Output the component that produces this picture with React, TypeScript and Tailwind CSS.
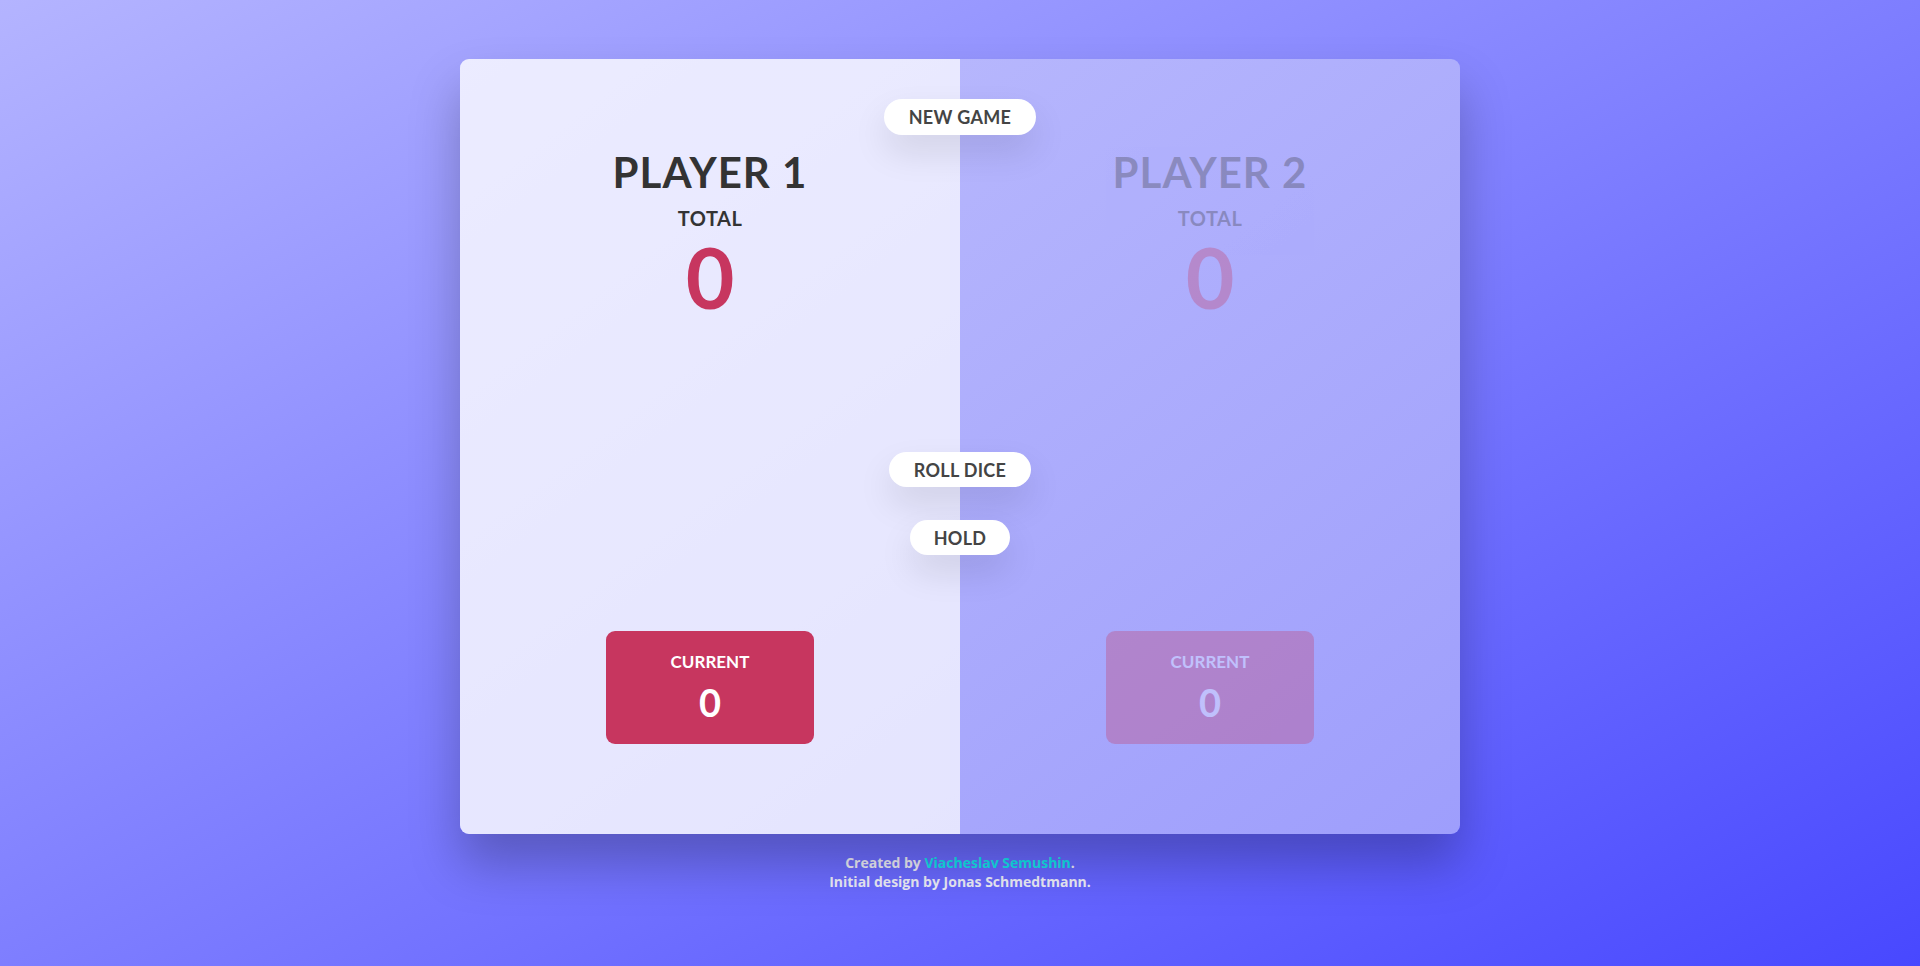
import React from "react";

function Player({ name, score, current, active }: { name: string; score: number; current: number; active: boolean }) {
  return (
    <section className={`flex-1 flex flex-col items-center pt-[88px] pb-[90px] ${active ? "bg-white/70" : ""}`}>
      <div className={`flex flex-col items-center flex-1 w-full ${active ? "" : "opacity-30"}`}>
        <h2 className="text-[42px] leading-[50px] font-bold text-[#333] uppercase tracking-[1px]">{name}</h2>
        <p className="mt-[9px] text-[20px] leading-[24px] font-bold text-[#333] uppercase tracking-[0.5px]">Total</p>
        <p className="mt-[5px] text-[84px] leading-[84px] font-bold text-[#c7365f]">{score}</p>
        <div className="mt-auto w-[208px] h-[113px] rounded-[9px] bg-[#c7365f] flex flex-col items-center pt-[22px] text-white">
          <p className="text-[17px] leading-[17px] font-bold uppercase">Current</p>
          <p className="mt-[13px] text-[38px] leading-[38px] font-bold">{current}</p>
        </div>
      </div>
    </section>
  );
}

export default function App() {
  const btn =
    "absolute left-1/2 -translate-x-1/2 bg-white rounded-full text-[#444] text-[18px] leading-[20px] font-bold uppercase tracking-[0.3px] flex items-center justify-center shadow-[0_17px_35px_rgba(0,0,0,0.1)]";
  return (
    <div
      className="w-full h-[966px] flex flex-col items-center pt-[59px] bg-[linear-gradient(to_bottom_right,#b4b4ff,#4848ff)]"
      style={{ fontFamily: "Lato, 'Noto Sans', sans-serif" }}
    >
      <main className="relative w-[1000px] h-[775px] flex rounded-[9px] overflow-hidden bg-[linear-gradient(to_bottom_right,#bebefd,#9e9efc)] shadow-[0_30px_50px_rgba(0,0,0,0.25)]">
        <Player name="Player 1" score={0} current={0} active={true} />
        <Player name="Player 2" score={0} current={0} active={false} />
        <button className={`${btn} top-[40px] w-[152px] h-[36px]`}>New game</button>
        <button className={`${btn} top-[393px] w-[142px] h-[35px]`}>Roll dice</button>
        <button className={`${btn} top-[461px] w-[100px] h-[35px]`}>Hold</button>
      </main>
      <footer
        className="mt-[19px] text-center text-[14px] leading-[19px] font-bold text-[#ececf8]"
        style={{ fontFamily: "'Open Sans', Lato, sans-serif" }}
      >
        <p>
          Created by <a className="text-[#12e2ea]">Viacheslav Semushin</a>.
        </p>
        <p>Initial design by Jonas Schmedtmann.</p>
      </footer>
    </div>
  );
}
